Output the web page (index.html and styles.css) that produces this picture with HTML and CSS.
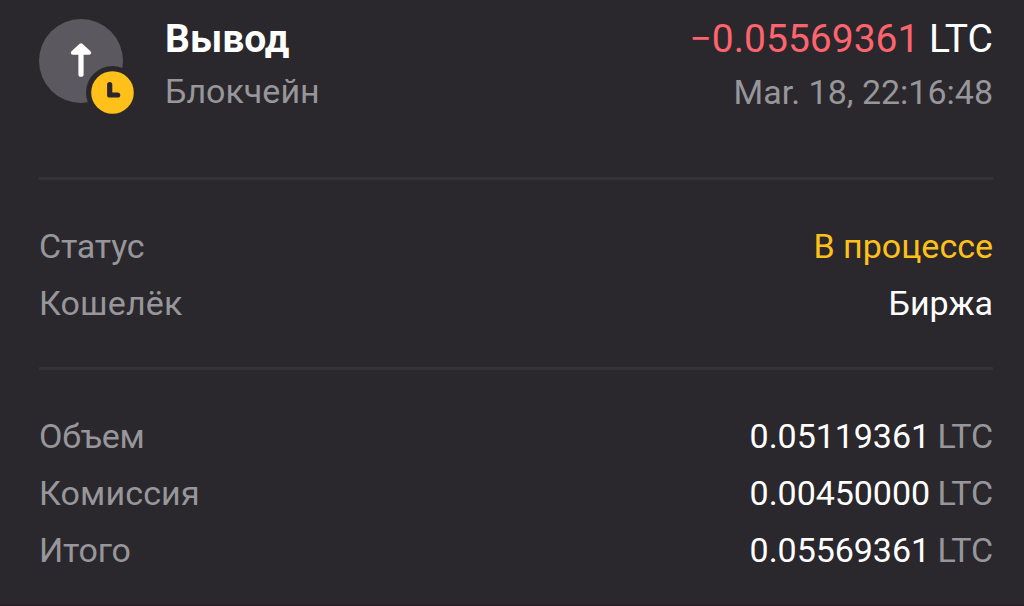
FILE: index.html
```html
<!DOCTYPE html>
<html lang="ru">
<head>
<meta charset="utf-8">
<title>Вывод LTC</title>
<link rel="stylesheet" href="styles.css">
</head>
<body>
<main class="details">
  <header class="summary">
    <div class="avatar">
      <svg class="avatar-icon" viewBox="0 0 96 96" aria-hidden="true">
        <circle cx="42" cy="42" r="42" fill="#5b595f"/>
        <path d="M42 55.200V32" fill="none" stroke="#fff" stroke-width="5.200" stroke-linecap="round"/>
        <path d="M42 26.300L50.200 33.700H33.800Z" fill="#fff" stroke="#fff" stroke-width="4" stroke-linejoin="round"/>
        <circle cx="73.500" cy="73.500" r="26.500" fill="#2a282d"/>
        <circle cx="73.500" cy="73.500" r="21.300" fill="#ffc119"/>
        <path d="M70.700 65.500V76H78.700" fill="none" stroke="#2a282d" stroke-width="5.200" stroke-linecap="round" stroke-linejoin="round"/>
      </svg>
    </div>
    <div class="operation">
      <h1 class="title">Вывод</h1>
      <p class="subtitle">Блокчейн</p>
    </div>
    <div class="total">
      <p class="amount"><span class="negative">−0.05569361</span> LTC</p>
      <p class="date">Mar. 18, 22:16:48</p>
    </div>
  </header>
  <dl class="rows rows-status">
    <div class="row"><dt class="snug">Статус</dt><dd class="pending">В процессе</dd></div>
    <div class="row"><dt class="loose">Кошелёк</dt><dd>Биржа</dd></div>
  </dl>
  <dl class="rows rows-amounts">
    <div class="row"><dt class="snug">Объем</dt><dd class="number">0.05119361 <span class="unit">LTC</span></dd></div>
    <div class="row"><dt class="loose">Комиссия</dt><dd class="number">0.00450000 <span class="unit">LTC</span></dd></div>
    <div class="row"><dt class="snug">Итого</dt><dd class="number">0.05569361 <span class="unit">LTC</span></dd></div>
  </dl>
</main>
</body>
</html>
```
FILE: styles.css
```css
* { box-sizing: border-box; margin: 0; padding: 0; }
body {
  background: #2a282d;
  color: #fff;
  font: 400 34px/57px Roboto, sans-serif;
  overflow: hidden;
}
.details { height: 606px; padding: 0 31px 0 39px; border-bottom: 1px solid #281c22; }
.summary { display: flex; height: 177px; }
.avatar { width: 126px; padding-top: 19px; }
.avatar-icon { display: block; width: 96px; height: 96px; }
.operation { flex: 1; padding-top: 12px; }
.title { font-size: 39px; font-weight: 700; line-height: 54px; }
.subtitle, .date, dt, .unit { color: #97969a; }
.subtitle { line-height: 51px; }
.date { line-height: 53px; }
.total { padding-top: 12px; text-align: right; }
.amount { font-size: 39px; line-height: 54px; }
.negative { color: #ff646e; }
.rows { height: 190px; padding-top: 38px; border-top: 3px solid #343237; }
.row { display: flex; justify-content: space-between; white-space: nowrap; }
.pending { color: #ffc119; }
.number { word-spacing: -1px; letter-spacing: -0.05px; }
.snug { letter-spacing: -0.2px; }
.loose { letter-spacing: 0.15px; }
```
